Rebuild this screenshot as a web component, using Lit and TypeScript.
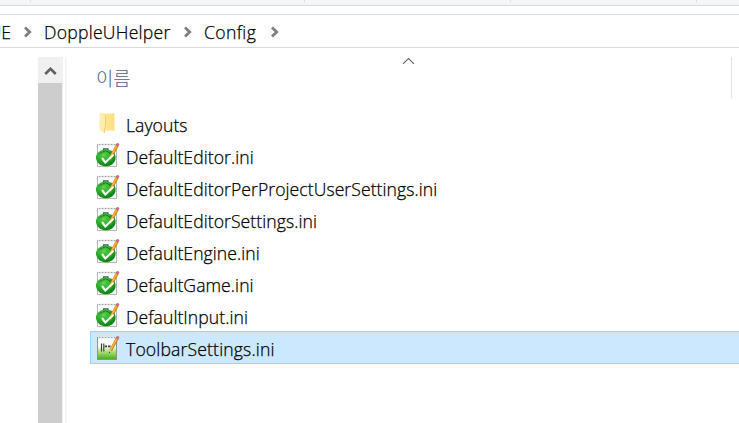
import { LitElement, html, svg, css } from "lit";
import { customElement } from "lit/decorators.js";
import { classMap } from "lit/directives/class-map.js";

type Kind = "folder" | "ini" | "config";
interface Entry { name: string; kind: Kind; selected?: boolean }

const entries: Entry[] = [
  { name: "Layouts", kind: "folder" },
  { name: "DefaultEditor.ini", kind: "ini" },
  { name: "DefaultEditorPerProjectUserSettings.ini", kind: "ini" },
  { name: "DefaultEditorSettings.ini", kind: "ini" },
  { name: "DefaultEngine.ini", kind: "ini" },
  { name: "DefaultGame.ini", kind: "ini" },
  { name: "DefaultInput.ini", kind: "ini" },
  { name: "ToolbarSettings.ini", kind: "config", selected: true },
];

const defs = svg`<defs>
  <linearGradient id="page" x1="0" y1="0" x2="0" y2="1">
    <stop offset="0.4" stop-color="#f8faf6"/><stop offset="0.66" stop-color="#a5e070"/><stop offset="1" stop-color="#3fae12"/>
  </linearGradient>
  <radialGradient id="ball" cx="0.4" cy="0.3" r="0.75">
    <stop offset="0" stop-color="#5fd04c"/><stop offset="0.6" stop-color="#22a022"/><stop offset="1" stop-color="#087311"/>
  </radialGradient>
  <linearGradient id="fold" x1="0" y1="0" x2="1" y2="0">
    <stop offset="0" stop-color="#ffe69c"/><stop offset="1" stop-color="#ffdf80"/>
  </linearGradient>
</defs>`;

const sheetEdge = svg`
  <path d="M2 2.5H20" stroke="#dde2e2" stroke-width="1.6"/>
  <path d="M3 2.5H20" stroke="#9ca3a6" stroke-width="1.2" stroke-dasharray="1.2 1.8"/>`;

const pencil = svg`
  <path d="M21.4 3L14.6 15.6" stroke="#bd7420" stroke-width="2.9"/>
  <path d="M21.2 2.8L14.4 15.4" stroke="#f6b93b" stroke-width="1.7"/>
  <path d="M20.9 4L22.3 1.4" stroke="#c9707c" stroke-width="2.9"/>
  <path d="M13.2 14.8L12.8 18.2L15.8 16.1Z" fill="#e3c193"/>
  <path d="M12.8 18.2L13 16.6L14.2 17.4Z" fill="#333"/>`;

const icon = (kind: Kind) => {
  if (kind === "folder") {
    return svg`${defs}
      <path d="M4.5 3.5H18.5V20.5H4.5Z" fill="url(#fold)"/>
      <path d="M3.5 2.5L9.5 5.5V16.5L8.5 23L3.5 20Z" fill="#ffecb0"/>
      <path d="M9.5 5.5V16.5L8.5 18V23" fill="none" stroke="#edc966" stroke-width="0.8"/>`;
  }
  if (kind === "ini") {
    return svg`${defs}
      <rect x="1.5" y="2.5" width="19" height="22" fill="#f8f9f9" stroke="#b3b9b9"/>${sheetEdge}
      <path d="M7.6 9.5V7H12V9.5" fill="none" stroke="#347039" stroke-width="1.3"/>
      <path d="M0 15.5C0 12 3 9 6 8.3H14C17 9 19.6 12 19.6 15.5C19.6 20 16 24.3 9.8 24.3C4 24.3 0 20 0 15.5Z" fill="url(#ball)"/>
      <path d="M3.5 11.5L9.5 8.8L15.5 11.5" fill="none" stroke="#16831d" stroke-width="1"/>
      ${pencil}
      <path d="M6 16L9.3 20.4L17.6 12.8" fill="none" stroke="#f6fff4" stroke-width="2.1"/>`;
  }
  return svg`${defs}
    <rect x="1.5" y="2.5" width="19" height="22" fill="url(#page)" stroke="#8c9590"/>${sheetEdge}
    <path d="M5.5 8.5V16.5M7.8 8.5V16.5" stroke="#333b31" stroke-width="1.1"/>
    <path d="M8.8 11.4H11M12 11.4H14.4" stroke="#333b31" stroke-width="1.6"/>
    ${pencil}`;
};

@customElement("app-root")
export class AppRoot extends LitElement {
  static styles = css`
    :host { display: flex; flex-direction: column; box-sizing: border-box; width: 739px; height: 423px; overflow: hidden; background: #fff; color: #000; font-family: "Open Sans", "Noto Sans CJK KR", sans-serif; font-size: 17.6px; font-weight: 300; -webkit-text-stroke: 0.25px currentColor; }
    svg { display: block; flex: none; }
    .ribbon { flex: none; height: 5px; background: #f5f6f8; border-bottom: 1px solid #d9d9d9; display: grid; grid-template-columns: 31px 274px 206px 186px 1fr; }
    .tick { width: 1px; height: 2px; background: #dcdde0; justify-self: end; }
    .address { flex: none; height: 32px; margin-top: 8px; border: solid #d9d9d9; border-width: 1px 0; display: flex; align-items: center; white-space: pre; }
    .crumb { line-height: 32px; padding-top: 2px; }
    .clip { width: 11px; display: flex; justify-content: flex-end; overflow: hidden; }
    .doc { width: 127px; margin-left: 12px; letter-spacing: 0.25px; }
    .conf { width: 54px; margin-left: 12px; letter-spacing: 0.35px; }
    .chev { margin-left: 13px; margin-top: 1px; }
    .body { flex: 1; display: flex; min-height: 0; padding-top: 9px; }
    .scroll { width: 25px; margin-left: 38px; background: #f0f0f0; display: flex; flex-direction: column; }
    .up { height: 26px; padding-top: 2px; box-sizing: border-box; display: flex; align-items: center; justify-content: center; }
    .thumb { flex: 1; background: #cdcdcd; margin-right: 1px; }
    .gutter { width: 2px; margin-left: 2px; background: #f5f5f5; }
    .main { flex: 1; min-width: 0; display: flex; flex-direction: column; }
    .head { height: 41px; width: 664px; border-right: 1px solid #e2e2e2; display: grid; grid-template-columns: 29px 1fr; position: relative; }
    .label { grid-column: 2; line-height: 44px; height: 41px; color: #4c607a; font-size: 18.8px; -webkit-text-stroke: 0; }
    .sort { position: absolute; left: 335px; top: 0; }
    .list { margin: 9px 0 0 23px; }
    .row { height: 32px; box-sizing: border-box; display: flex; align-items: center; padding-left: 5px; border: 1px solid transparent; border-right: 0; white-space: nowrap; }
    .row.selected { height: 33px; background: #cce8ff; border-color: #99d1ff; }
    .name { margin-left: 6px; padding-top: 4px; line-height: 26px; letter-spacing: 0.06px; }
    .selected .name { padding-top: 3px; letter-spacing: 0.15px; }
  `;

  private chevron() {
    return html`<svg class="chev" width="8" height="12" viewBox="0 0 8 12"><path d="M1 1.5L5.6 6L1 10.5" fill="none" stroke="#808080" stroke-width="2.9"/></svg>`;
  }

  render() {
    return html`
      <div class="ribbon"><i class="tick"></i><i class="tick"></i><i class="tick"></i><i class="tick"></i></div>
      <nav class="address">
        <span class="crumb clip">UE</span>${this.chevron()}<span class="crumb doc">DoppleUHelper</span>${this.chevron()}<span class="crumb conf">Config</span>${this.chevron()}
      </nav>
      <div class="body">
        <div class="scroll">
          <div class="up"><svg width="13" height="10" viewBox="0 0 13 10"><path d="M1.2 8L6.5 2.8L11.8 8" fill="none" stroke="#606060" stroke-width="2.6"/></svg></div>
          <div class="thumb"></div>
        </div>
        <div class="gutter"></div>
        <div class="main">
          <div class="head">
            <span class="label">이름</span>
            <svg class="sort" width="13" height="8" viewBox="0 0 13 8"><path d="M1 6.8L6.5 1.6L12 6.8" fill="none" stroke="#666" stroke-width="1.1"/></svg>
          </div>
          <div class="list">
            ${entries.map((e) => html`<div class=${classMap({ row: true, selected: !!e.selected })}>
              <svg width="24" height="26" viewBox="0 0 24 26">${icon(e.kind)}</svg>
              <span class="name">${e.name}</span>
            </div>`)}
          </div>
        </div>
      </div>`;
  }
}
